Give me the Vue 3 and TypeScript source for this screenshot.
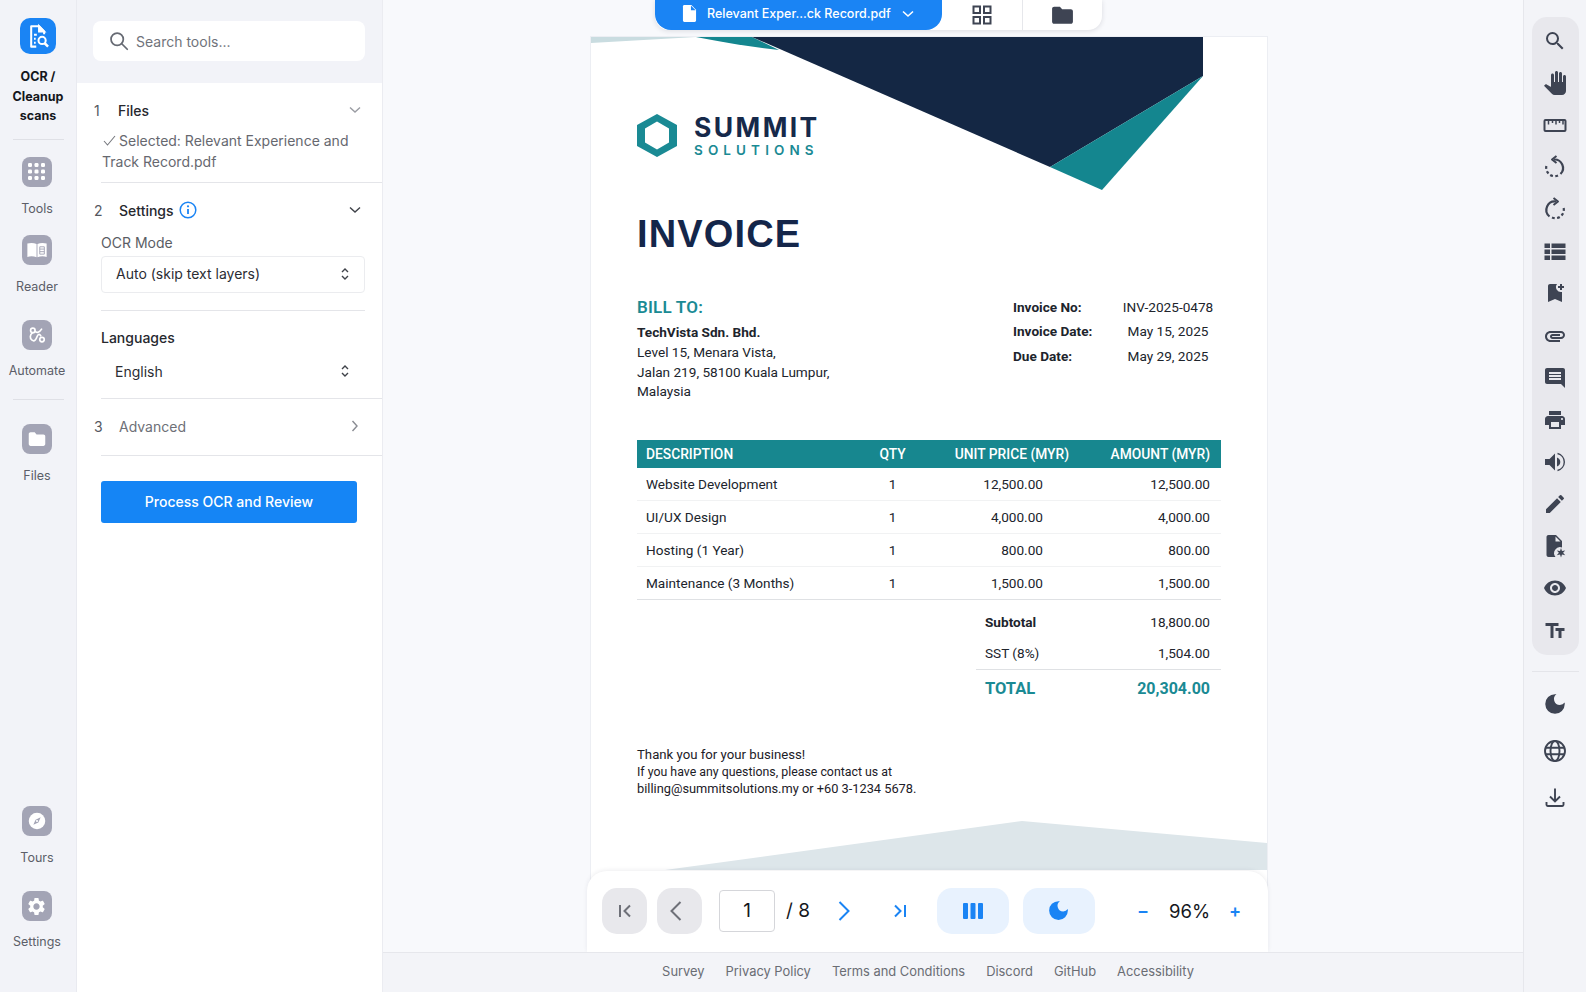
<template>
  <div class="app">
    <!-- left rail -->
    <nav class="rail">
      <div class="rail-active">
        <span class="ocr-icon">
          <svg viewBox="0 0 24 24" width="27" height="27" fill="none" stroke="#fff" stroke-width="1.800">
            <path d="M10 21H5.500V2.800h7l4.500 4.700V10" stroke-linejoin="round" />
            <path d="M12.500 2.800v4.700H17z" fill="#fff" />
            <path d="M8 10.500h2.500M8 14h1.500M8 17.500h1.500" />
            <circle cx="15.200" cy="15.500" r="3.200" />
            <path d="M17.500 18l3 3" stroke-width="2.200" />
          </svg>
        </span>
        <span class="rail-title">OCR /<br />Cleanup<br />scans</span>
      </div>
      <div class="rail-rule first"></div>
      <button class="rail-btn tools">
        <span class="rail-icon">
          <svg viewBox="0 0 20 20" width="20" height="20" fill="#fff">
            <rect v-for="d in toolDots" :key="d.k" :x="d.x" :y="d.y" width="4" height="4" rx="1.200" />
          </svg>
        </span>
        <span>Tools</span>
      </button>
      <button class="rail-btn reader">
        <span class="rail-icon">
          <svg viewBox="0 0 24 24" width="22" height="22">
            <path d="M1.500 5c3-1 7-1 10 .5V20c-3-1.500-7-1.500-10-.5z" fill="#fff" />
            <path d="M12.500 5.500c3-1.500 7-1.500 10-.5v14.500c-3-1-7-1-10 .5z" fill="#fff" />
            <path d="M15 8.500h5v8h-5zM15 11h5M15 13.800h5" fill="none" stroke="#a3a4b5" stroke-width="1" />
          </svg>
        </span>
        <span>Reader</span>
      </button>
      <button class="rail-btn automate">
        <span class="rail-icon">
          <svg viewBox="0 0 24 24" width="20" height="20" fill="none" stroke="#fff" stroke-width="2" stroke-linecap="round">
            <circle cx="7" cy="6.500" r="2.700" />
            <circle cx="18" cy="17.500" r="2.700" />
            <path d="M9.500 7.500c2 2.500 5.500 1.500 8-2.500" />
            <path d="M6.500 9.500C3.500 11.500 3 16 6 18.200s5-1 6-4 2.800-4 4.500-1.300" />
          </svg>
        </span>
        <span>Automate</span>
      </button>
      <div class="rail-rule second"></div>
      <button class="rail-btn files">
        <span class="rail-icon">
          <svg viewBox="0 0 24 24" width="22" height="22" fill="#fff">
            <path d="M3 6.500C3 5.400 3.900 4.500 5 4.500h4.500l2 2.500H19c1.100 0 2 .9 2 2v8.500c0 1.100-.9 2-2 2H5c-1.100 0-2-.9-2-2z" />
          </svg>
        </span>
        <span>Files</span>
      </button>
      <div class="rail-spacer"></div>
      <button class="rail-btn tours">
        <span class="rail-icon">
          <svg viewBox="0 0 24 24" width="22" height="22">
            <circle cx="12" cy="12" r="9" fill="#fff" />
            <path d="M16 8l-2.500 5.500L8 16l2.500-5.500z" fill="#a3a4b5" />
            <circle cx="12" cy="12" r="1.200" fill="#fff" />
          </svg>
        </span>
        <span>Tours</span>
      </button>
      <button class="rail-btn settings">
        <span class="rail-icon">
          <svg viewBox="0 0 24 24" width="21" height="21" fill="#fff">
            <path d="M19.140 12.940c.04-.3.060-.61.060-.94 0-.32-.02-.64-.07-.94l2.030-1.580a.49.49 0 0 0 .12-.61l-1.920-3.320a.488.488 0 0 0-.59-.22l-2.390.96c-.5-.38-1.030-.7-1.620-.94l-.36-2.540a.484.484 0 0 0-.48-.41h-3.840c-.24 0-.43.17-.47.41l-.36 2.540c-.59.24-1.130.57-1.620.94l-2.390-.96c-.22-.08-.47 0-.59.22L2.740 8.870c-.12.21-.08.47.12.61l2.030 1.580c-.05.3-.09.63-.09.94s.02.64.07.94l-2.030 1.580a.49.49 0 0 0-.12.61l1.920 3.320c.12.22.37.29.59.22l2.390-.96c.5.38 1.030.7 1.620.94l.36 2.540c.05.24.24.41.48.41h3.840c.24 0 .44-.17.47-.41l.36-2.540c.59-.24 1.130-.56 1.620-.94l2.390.96c.22.08.47 0 .59-.22l1.920-3.320c.12-.22.07-.47-.12-.61l-2.010-1.580zM12 15.600A3.610 3.610 0 0 1 8.400 12c0-1.980 1.620-3.600 3.600-3.600s3.600 1.620 3.600 3.600-1.620 3.600-3.600 3.600z" />
          </svg>
        </span>
        <span>Settings</span>
      </button>
    </nav>

    <!-- tool panel -->
    <aside class="panel">
      <div class="search-wrap">
        <div class="search">
          <svg viewBox="0 0 24 24" width="22" height="22" fill="none" stroke="#666a73" stroke-width="1.900">
            <circle cx="10" cy="10" r="6.700" />
            <path d="M15 15l6 6" stroke-linecap="round" />
          </svg>
          <span>Search tools...</span>
        </div>
      </div>

      <section class="step step-files">
        <div class="step-head">
          <span class="num">1</span>
          <span class="step-name">Files</span>
          <svg class="chev light" viewBox="0 0 12 8" width="12" height="8"><path d="M1 1.500l5 4.500 5-4.500" /></svg>
        </div>
        <p class="selected">
          <svg class="tick" viewBox="0 0 13 11" width="13" height="11"><path d="M1 6l3.500 4L12 1" /></svg>Selected: Relevant Experience and Track Record.pdf
        </p>
      </section>

      <section class="step step-settings">
        <div class="step-head">
          <span class="num">2</span>
          <span class="step-name">Settings</span>
          <svg class="info" viewBox="0 0 18 18" width="18" height="18">
            <circle cx="9" cy="9" r="7.800" fill="none" stroke="#1a84f4" stroke-width="1.500" />
            <path d="M9 8v5" stroke="#1a84f4" stroke-width="1.800" />
            <circle cx="9" cy="5.300" r="1.100" fill="#1a84f4" />
          </svg>
          <svg class="chev" viewBox="0 0 12 8" width="12" height="8"><path d="M1 1.500l5 4.500 5-4.500" /></svg>
        </div>
        <div class="field-label">OCR Mode</div>
        <div class="select">
          <span>Auto (skip text layers)</span>
          <svg viewBox="0 0 10 16" width="10" height="16" class="updown"><path d="M2 6l3-3 3 3M2 10l3 3 3-3" /></svg>
        </div>
        <div class="inner-rule"></div>
        <div class="lang-label">Languages</div>
        <div class="lang-select">
          <span>English</span>
          <svg viewBox="0 0 10 16" width="10" height="16" class="updown"><path d="M2 6l3-3 3 3M2 10l3 3 3-3" /></svg>
        </div>
      </section>

      <section class="step step-advanced">
        <div class="step-head muted">
          <span class="num">3</span>
          <span class="step-name">Advanced</span>
          <svg class="chev-right" viewBox="0 0 8 12" width="8" height="12"><path d="M1.500 1l4.500 5-4.500 5" /></svg>
        </div>
      </section>

      <button class="process">Process OCR and Review</button>
    </aside>

    <!-- viewer -->
    <main class="main">
      <div class="viewer">
        <div class="doc-tabs">
          <div class="doc-tab">
            <svg viewBox="0 0 16 20" width="15" height="19">
              <path d="M1 2.500C1 1.700 1.700 1 2.500 1H10l5 5v11.500c0 .8-.7 1.500-1.500 1.500h-11C1.700 19 1 18.300 1 17.500z" fill="#fff" />
              <path d="M9.500 1.500v5h5z" fill="#1a84f4" />
            </svg>
            <span>Relevant Exper...ck Record.pdf</span>
            <svg class="tab-chev" viewBox="0 0 12 8" width="12" height="8"><path d="M1 1.500l5 4.500 5-4.500" /></svg>
          </div>
          <div class="doc-action">
            <svg viewBox="0 0 20 20" width="20" height="20" fill="none" stroke="#3e4453" stroke-width="2">
              <rect x="1.500" y="1.500" width="6.500" height="6.500" />
              <rect x="12" y="1.500" width="6.500" height="6.500" />
              <rect x="1.500" y="12" width="6.500" height="6.500" />
              <rect x="12" y="12" width="6.500" height="6.500" />
            </svg>
          </div>
          <div class="doc-action">
            <svg viewBox="0 0 24 24" width="25" height="25" fill="#3e4453">
              <path d="M2 5.500C2 4.400 2.900 3.500 4 3.500h5.500l2.200 2.500H20c1.100 0 2 .9 2 2v10c0 1.100-.9 2-2 2H4c-1.100 0-2-.9-2-2z" />
            </svg>
          </div>
        </div>

        <article class="page">
          <svg class="page-art" viewBox="0 0 676 200" width="676" height="200">
            <path d="M0 0h105L0 6z" fill="#c9dce0" />
            <path d="M105 0h56l27 13C160 10 130 5 105 0z" fill="#14868f" />
            <path d="M161 0h451v39L459 130z" fill="#142744" />
            <path d="M612 39L459 130l52 23z" fill="#14868f" />
          </svg>
          <svg class="page-art-bottom" viewBox="0 0 676 60" width="676" height="60">
            <path d="M74 60L431 11 676 33v27z" fill="#dde6ea" />
          </svg>

          <div class="brand">
            <svg viewBox="0 0 40 43" width="40" height="43">
              <path fill-rule="evenodd" d="M20 0L40 11V32L20 43 0 32V11zM20 7.500L8 14.500V28.500L20 35.500 32 28.500V14.500z" fill="#1a8a94" />
            </svg>
            <div class="brand-text">
              <div class="brand-name">SUMMIT</div>
              <div class="brand-sub">SOLUTIONS</div>
            </div>
          </div>

          <h1 class="invoice-title">INVOICE</h1>

          <div class="info-row">
            <div class="bill">
              <div class="bill-label">BILL TO:</div>
              <div class="bill-name">TechVista Sdn. Bhd.</div>
              <div>Level 15, Menara Vista,</div>
              <div>Jalan 219, 58100 Kuala Lumpur,</div>
              <div>Malaysia</div>
            </div>
            <div class="meta">
              <template v-for="m in meta" :key="m.label">
                <span class="meta-label">{{ m.label }}</span>
                <span class="meta-value">{{ m.value }}</span>
              </template>
            </div>
          </div>

          <div class="table">
            <div class="thead">
              <span class="c-desc">DESCRIPTION</span>
              <span class="c-qty">QTY</span>
              <span class="c-unit">UNIT PRICE (MYR)</span>
              <span class="c-amt">AMOUNT (MYR)</span>
            </div>
            <div v-for="r in rows" :key="r.desc" class="trow">
              <span class="c-desc">{{ r.desc }}</span>
              <span class="c-qty">1</span>
              <span class="c-unit val">{{ r.unit }}</span>
              <span class="c-amt">{{ r.amount }}</span>
            </div>
          </div>

          <div class="totals">
            <div class="tot-row"><b>Subtotal</b><span>18,800.00</span></div>
            <div class="tot-row tax"><span>SST (8%)</span><span>1,504.00</span></div>
            <div class="tot-row grand"><span>TOTAL</span><span class="grand-val">20,304.00</span></div>
          </div>

          <div class="thanks">
            <div class="thanks-first">Thank you for your business!</div>
            <div class="thanks-second">If you have any questions, please contact us at</div>
            <div class="thanks-third">billing@summitsolutions.my or +60 3-1234 5678.</div>
          </div>
        </article>

        <div class="pager">
          <button class="pg-btn grey">
            <svg viewBox="0 0 16 16" width="16" height="16" class="s-dark"><path d="M3 2v12M13 2.500L7.500 8l5.500 5.500" /></svg>
          </button>
          <button class="pg-btn grey second">
            <svg class="prev" viewBox="0 0 14 22" width="14" height="22"><path d="M11.500 2L2.500 11l9 9" /></svg>
          </button>
          <div class="page-input">1</div>
          <span class="page-total">/ 8</span>
          <svg class="pg-next" viewBox="0 0 14 22" width="14" height="22"><path d="M2.500 2l9 9-9 9" /></svg>
          <svg class="pg-last" viewBox="0 0 16 16" width="16" height="16"><path d="M3 2.500L8.500 8 3 13.500M13 2v12" /></svg>
          <button class="pg-btn blue columns">
            <svg viewBox="0 0 20 16" width="20" height="16" fill="#1a84f4">
              <rect x="0" y="0" width="5" height="16" rx="1" />
              <rect x="7.500" y="0" width="5" height="16" rx="1" />
              <rect x="15" y="0" width="5" height="16" rx="1" />
            </svg>
          </button>
          <button class="pg-btn blue moon">
            <svg viewBox="0 0 24 24" width="25" height="25" fill="#1a84f4"><path :d="icons.moon" /></svg>
          </button>
          <span class="zoom-sign minus">−</span>
          <span class="zoom-val">96%</span>
          <span class="zoom-sign">+</span>
        </div>
      </div>

      <footer class="footer">
        <a v-for="l in links" :key="l">{{ l }}</a>
      </footer>
    </main>

    <!-- right rail -->
    <aside class="right">
      <div class="pill">
        <span v-for="t in topTools" :key="t.name" class="tool">
          <svg v-if="t.name === 'ruler'" viewBox="0 0 24 24" width="24" height="24" fill="none" stroke="#3e4453" stroke-width="2">
            <rect x="1.500" y="7" width="21" height="11" rx="1" />
            <path d="M5.500 7v4.500M9.500 7v3M13 7v4.500M16.500 7v3M20 7v4.500" stroke-width="1.500" />
          </svg>
          <svg v-else-if="t.name === 'undo'" viewBox="0 0 24 24" width="24" height="24" fill="none" stroke="#3e4453" stroke-width="2.200">
            <path d="M11 4.500a8.500 8.500 0 0 1 6.500 14.500" />
            <path d="M15 20.500a8.500 8.500 0 0 1-11-11.500" stroke-dasharray="2.800 2.300" />
            <path d="M13.500 1L9 4.500 13.500 8" stroke-width="2" stroke-linejoin="round" />
          </svg>
          <svg v-else-if="t.name === 'redo'" viewBox="0 0 24 24" width="24" height="24" fill="none" stroke="#3e4453" stroke-width="2.200">
            <path d="M13 4.500A8.500 8.500 0 0 0 6.500 19.500" />
            <path d="M9 20.500a8.500 8.500 0 0 0 11-11.500" stroke-dasharray="2.800 2.300" />
            <path d="M10.500 1L15 4.500 10.500 8" stroke-width="2" stroke-linejoin="round" />
          </svg>
          <svg v-else-if="t.name === 'list'" viewBox="0 0 24 24" width="24" height="24" fill="#3e4453">
            <path d="M1.500 4.500h5.500v4.500H1.500zM8.500 4.500H22.500v4.500H8.500zM1.500 10.500h5.500v4.500H1.500zM8.500 10.500H22.500v4.500H8.500zM1.500 16.500h5.500V21H1.500zM8.500 16.500H22.500V21H8.500z" />
          </svg>
          <svg v-else-if="t.name === 'filestar'" viewBox="0 0 24 24" width="24" height="24" fill="#3e4453">
            <path d="M3.500 3c0-1.100.9-2 2-2H13l6 6v6.500a6 6 0 0 0-6.500 9.500h-7c-1.100 0-2-.9-2-2zM12.500 2.500V7.500h5z" />
            <path d="M18 14l1 3 3.200-.6-2.100 2.400 2.100 2.400L19 20.600 18 23.500l-1-2.900-3.200.6 2.100-2.400-2.100-2.400 3.200.6z" />
          </svg>
          <svg v-else-if="t.name === 'sound'" viewBox="0 0 24 24" width="24" height="24" fill="#3e4453">
            <path d="M2 9v6h4.500L12 20.500V3.500L6.500 9z" />
            <path d="M14 7.500c2 .9 3.300 2.500 3.300 4.500S16 15.600 14 16.500z" />
            <path d="M14.500 3.500c4 1 6.800 4.500 6.800 8.500s-2.800 7.500-6.800 8.500" fill="none" stroke="#3e4453" stroke-width="1.400" />
          </svg>
          <svg v-else viewBox="0 0 24 24" width="24" height="24" fill="#3e4453"><path :d="t.d" /></svg>
        </span>
      </div>
      <div class="right-rule"></div>
      <span class="tool low">
        <svg viewBox="0 0 24 24" width="26" height="26" fill="#3e4453"><path :d="icons.moon" /></svg>
      </span>
      <span class="tool low">
        <svg viewBox="0 0 24 24" width="24" height="24" fill="none" stroke="#3e4453" stroke-width="1.900">
          <circle cx="12" cy="12" r="10" />
          <ellipse cx="12" cy="12" rx="4.500" ry="10" />
          <path d="M2.500 8.700h19M2.500 15.300h19" />
        </svg>
      </span>
      <span class="tool low">
        <svg viewBox="0 0 24 24" width="24" height="24" fill="none" stroke="#3e4453" stroke-width="1.900">
          <path d="M12 3.500v12.500M7 11.500l5 5 5-5" />
          <path d="M3.500 17v2.800c0 .7.500 1.200 1.200 1.200h14.600c.7 0 1.200-.5 1.200-1.200V17" />
        </svg>
      </span>
    </aside>
  </div>
</template>

<script setup lang="ts">
interface InvoiceRow {
  desc: string;
  unit: string;
  amount: string;
}

const icons = {
  moon: "M12 3a9 9 0 1 0 9 9c0-.46-.04-.92-.1-1.360a5.389 5.389 0 0 1-4.400 2.260 5.403 5.403 0 0 1-3.140-9.800c-.44-.06-.9-.1-1.360-.1z",
};

// 3x3 dots of the Tools button
const toolDots = [0, 1, 2].flatMap((row) =>
  [0, 1, 2].map((col) => ({ k: `${row}-${col}`, x: 1 + col * 6.5, y: 1 + row * 6.5 }))
);

const meta = [
  { label: "Invoice No:", value: "INV-2025-0478" },
  { label: "Invoice Date:", value: "May 15, 2025" },
  { label: "Due Date:", value: "May 29, 2025" },
];

const rows: InvoiceRow[] = [
  { desc: "Website Development", unit: "12,500.00", amount: "12,500.00" },
  { desc: "UI/UX Design", unit: "4,000.00", amount: "4,000.00" },
  { desc: "Hosting (1 Year)", unit: "800.00", amount: "800.00" },
  { desc: "Maintenance (3 Months)", unit: "1,500.00", amount: "1,500.00" },
];

const links = ["Survey", "Privacy Policy", "Terms and Conditions", "Discord", "GitHub", "Accessibility"];

const topTools = [
  { name: "search", d: "M15.500 14h-.79l-.28-.27A6.471 6.471 0 0 0 16 9.500 6.500 6.500 0 1 0 9.500 16c1.610 0 3.090-.59 4.230-1.570l.27.28v.79l5 4.990L20.490 19l-4.990-5zm-6 0C7.010 14 5 11.990 5 9.500S7.010 5 9.500 5 14 7.010 14 9.500 11.990 14 9.500 14z" },
  { name: "hand", d: "M23 5.500V20c0 2.200-1.800 4-4 4h-7.300c-1.080 0-2.100-.43-2.850-1.190L1 14.830s1.260-1.230 1.300-1.250c.22-.19.49-.29.79-.29.22 0 .42.060.6.160.04.010 4.310 2.460 4.310 2.460V4c0-.83.67-1.500 1.500-1.500S11 3.170 11 4v7h1V1.500c0-.83.67-1.500 1.500-1.500S15 .67 15 1.500V11h1V2.500c0-.83.67-1.500 1.500-1.500s1.500.67 1.500 1.500V11h1V5.500c0-.83.67-1.500 1.500-1.500s1.500.67 1.500 1.500z" },
  { name: "ruler", d: "" },
  { name: "undo", d: "" },
  { name: "redo", d: "" },
  { name: "list", d: "" },
  { name: "bookmark", d: "M21 7h-2v2h-2V7h-2V5h2V3h2v2h2v2zm-2 14l-7-3-7 3V5c0-1.100.9-2 2-2h7a5.002 5.002 0 0 0 5 7.900V21z" },
  { name: "attach", d: "M2 12.500C2 9.460 4.460 7 7.500 7H18c2.210 0 4 1.790 4 4s-1.790 4-4 4H9.500C8.120 15 7 13.880 7 12.500S8.120 10 9.500 10H17v2H9.410c-.55 0-.55 1 0 1H18c1.100 0 2-.9 2-2s-.9-2-2-2H7.500C5.570 9 4 10.570 4 12.500S5.570 16 7.500 16H17v2H7.500C4.460 18 2 15.540 2 12.500z" },
  { name: "comment", d: "M21.990 4c0-1.100-.89-2-1.990-2H4c-1.100 0-2 .9-2 2v12c0 1.100.9 2 2 2h14l4 4-.01-18zM18 14H6v-2h12v2zm0-3H6V9h12v2zm0-3H6V6h12v2z" },
  { name: "print", d: "M19 8H5c-1.660 0-3 1.340-3 3v6h4v4h12v-4h4v-6c0-1.660-1.340-3-3-3zm-3 11H8v-5h8v5zm3-7c-.55 0-1-.45-1-1s.45-1 1-1 1 .45 1 1-.45 1-1 1zm-1-9H6v4h12V3z" },
  { name: "sound", d: "" },
  { name: "pencil", d: "M3 17.250V21h3.750L17.810 9.940l-3.750-3.750L3 17.250zM20.710 7.040a.996.996 0 0 0 0-1.410l-2.340-2.340a.996.996 0 0 0-1.410 0l-1.830 1.830 3.750 3.750 1.830-1.830z" },
  { name: "filestar", d: "" },
  { name: "eye", d: "M12 4.500C7 4.500 2.730 7.610 1 12c1.730 4.390 6 7.500 11 7.500s9.270-3.110 11-7.500c-1.730-4.390-6-7.500-11-7.500zM12 17c-2.760 0-5-2.240-5-5s2.240-5 5-5 5 2.240 5 5-2.240 5-5 5zm0-8c-1.660 0-3 1.340-3 3s1.340 3 3 3 3-1.340 3-3-1.340-3-3-3z" },
  { name: "text", d: "M2.500 4v3h5v12h3V7h5V4h-13zm19 5h-9v3h3v7h3v-7h3V9z" },
];
</script>

<style scoped>
* {
  box-sizing: border-box;
}

button {
  border: 0;
  background: none;
  padding: 0;
  font: inherit;
  color: inherit;
}

.app {
  display: flex;
  width: 1586px;
  height: 992px;
  overflow: hidden;
  font-family: Inter, "Noto Sans", sans-serif;
  color: #222;
  background: #f8f9fc;
}

/* left rail */
.rail {
  width: 77px;
  flex: none;
  display: flex;
  flex-direction: column;
  align-items: center;
  background: #f2f3f8;
  border-right: 1px solid #e9eaf0;
}

.rail-active {
  display: flex;
  flex-direction: column;
  align-items: center;
  padding-top: 18px;
}

.ocr-icon {
  width: 36px;
  height: 36px;
  border-radius: 10px;
  background: #1a84f4;
  display: flex;
  align-items: center;
  justify-content: center;
}

.rail-title {
  margin-top: 13px;
  font-size: 12.5px;
  font-weight: 700;
  line-height: 19.500px;
  text-align: center;
  color: #15171c;
}

.rail-rule {
  width: 51px;
  height: 1px;
  background: #dfe0e6;
}

.rail-rule.first {
  margin-top: 13px;
}

.rail-rule.second {
  margin-top: 20px;
}

.rail-btn {
  display: flex;
  flex-direction: column;
  align-items: center;
  margin-right: 2px;
  font-size: 12.500px;
  color: #5c5e68;
  line-height: 16px;
}

.rail-icon {
  width: 30px;
  height: 30px;
  border-radius: 8px;
  background: #a3a4b5;
  display: flex;
  align-items: center;
  justify-content: center;
  margin-bottom: 14px;
}

.tools { margin-top: 17px; }
.reader { margin-top: 18px; }
.automate { margin-top: 25px; }
.automate .rail-icon { margin-bottom: 13px; }
.files { margin-top: 24px; }
.rail-spacer { flex: 1; }
.settings { margin-top: 25px; margin-bottom: 42px; }
.settings .rail-icon { margin-bottom: 13px; }

/* tool panel */
.panel {
  width: 306px;
  flex: none;
  background: #fff;
  border-right: 1px solid #ebecf1;
}

.search-wrap {
  height: 83px;
  padding: 21px 17px 0 16px;
  background: #f2f3f8;
}

.search {
  display: flex;
  align-items: center;
  gap: 6px;
  height: 40px;
  padding-left: 15px;
  border-radius: 8px;
  background: #fff;
  color: #70737b;
  font-size: 14px;
}

.step {
  margin-left: 24px;
  border-bottom: 1px solid #e4e5e9;
}

.step-head {
  position: relative;
  display: flex;
  align-items: center;
  height: 20px;
  font-size: 14px;
  font-weight: 500;
  color: #26282e;
}

.num {
  width: 24px;
  margin-left: -7px;
  color: #55585f;
  font-weight: 400;
}

.step-name {
  margin-left: 0;
}

.step-settings .step-name,
.step-advanced .step-name {
  margin-left: 1px;
}

.chev,
.chev-right,
.tab-chev,
.updown {
  fill: none;
  stroke: #3f4249;
  stroke-width: 1.400;
}

.chev {
  position: absolute;
  right: 21px;
  top: 6px;
}

.chev.light {
  stroke: #9a9ca3;
}

.chev-right {
  position: absolute;
  right: 23px;
  top: 4px;
  stroke: #8a8c93;
}

.info {
  margin-left: 5px;
}

.step-files {
  height: 100px;
  padding-top: 17px;
}

.selected {
  margin: 10px 16px 0 1px;
  font-size: 14px;
  line-height: 21px;
  color: #66686f;
}

.tick {
  margin: 0 3px 0 1px;
  fill: none;
  stroke: #77797f;
  stroke-width: 1.100;
}

.step-settings {
  height: 216px;
  padding-top: 17px;
}

.field-label {
  margin: 13px 0 0;
  font-size: 14px;
  line-height: 20px;
  color: #5a5d64;
}

.select {
  display: flex;
  align-items: center;
  justify-content: space-between;
  width: 264px;
  height: 37px;
  margin: 3px 0 0;
  padding: 0 14px 2px;
  border: 1px solid #ebecef;
  border-radius: 4px;
  font-size: 14px;
  color: #2b2d33;
}

.inner-rule {
  width: 264px;
  height: 1px;
  margin: 17px 0 0;
  background: #e4e5e9;
}

.lang-label {
  margin: 17px 0 0;
  font-size: 14px;
  font-weight: 500;
  line-height: 20px;
  color: #26282e;
}

.lang-select {
  display: flex;
  align-items: center;
  justify-content: space-between;
  width: 235px;
  margin: 13px 0 0 14px;
  height: 20px;
  font-size: 14px;
  color: #2b2d33;
}

.step-advanced {
  height: 57px;
  padding-top: 17px;
}

.muted {
  font-weight: 400;
  color: #6e7077;
}

.process {
  display: block;
  width: 256px;
  height: 42px;
  margin: 25px 0 0 24px;
  padding-bottom: 2px;
  border-radius: 3px;
  background: #1585f5;
  color: #fff;
  font-size: 14px;
  font-weight: 500;
}

/* viewer */
.main {
  flex: 1;
  min-width: 0;
  display: flex;
  flex-direction: column;
}

.viewer {
  position: relative;
  flex: 1;
  min-height: 0;
  overflow: hidden;
}

.doc-tabs {
  position: absolute;
  z-index: 2;
  top: 0;
  left: 272px;
  width: 447px;
  height: 30px;
  display: flex;
  background: #fff;
  border-radius: 0 0 14px 14px;
  box-shadow: 0 1px 5px rgba(40, 44, 60, 0.14);
}

.doc-tab {
  width: 287px;
  display: flex;
  align-items: center;
  padding: 0 0 3px 27px;
  border-radius: 0 0 16px 16px;
  background: #1a84f4;
  color: #fff;
  font-size: 12.500px;
  font-weight: 500;
}

.doc-tab span {
  margin-left: 10px;
}

.tab-chev {
  stroke: #fff;
  stroke-width: 1.600;
  margin-left: 11px;
}

.doc-action {
  flex: 1;
  display: flex;
  align-items: center;
  justify-content: center;
}

.doc-action + .doc-action {
  border-left: 1px solid #e6e7eb;
}

.page {
  position: relative;
  width: 676px;
  height: 900px;
  margin: 37px 0 0 208px;
  padding: 77px 46px 0;
  background: #fff;
  box-shadow: 0 0 0 1px #eceef3;
  font-family: Roboto, "Liberation Sans", sans-serif;
  font-size: 13.600px;
  color: #20242c;
}

.page-art {
  position: absolute;
  top: 0;
  left: 0;
}

.page-art-bottom {
  position: absolute;
  top: 773px;
  left: 0;
}

.brand {
  position: relative;
  display: flex;
  align-items: center;
  height: 43px;
}

.brand-text {
  margin-left: 17px;
  font-family: Inter, sans-serif;
  line-height: 1;
}

.brand-name {
  font-size: 26.500px;
  font-weight: 700;
  letter-spacing: 2.400px;
  color: #16294a;
  line-height: 26px;
}

.brand-sub {
  margin-top: 3px;
  font-size: 13.500px;
  font-weight: 600;
  letter-spacing: 5.100px;
  color: #1a8a94;
  line-height: 14px;
}

.invoice-title {
  position: relative;
  margin: 54px 0 0;
  font-family: "Liberation Sans", sans-serif;
  font-size: 38px;
  font-weight: 700;
  line-height: 46px;
  color: #14264a;
  letter-spacing: 1.150px;
}

.info-row {
  display: flex;
  justify-content: space-between;
  margin-top: 39px;
}

.bill {
  line-height: 19.800px;
}

.bill-label {
  font-size: 17px;
  font-weight: 600;
  letter-spacing: 0.200px;
  line-height: 20px;
  margin-top: 0.500px;
  margin-bottom: 6.500px;
  color: #1a8a94;
}

.bill-name,
.meta-label {
  font-weight: 700;
}

.meta {
  display: grid;
  grid-template-columns: 101px 108px;
  grid-auto-rows: 24.300px;
  margin: -1px -1px 0 0;
  align-items: center;
}

.meta-value {
  text-align: center;
}

.table {
  margin-top: 38px;
}

.thead,
.trow {
  display: grid;
  grid-template-columns: 223px 65px 155px 141px;
  align-items: center;
}

.thead {
  height: 28px;
  background: #17878f;
  color: #fff;
  font-size: 13.800px;
  font-weight: 500;
}

.trow {
  height: 33px;
  border-bottom: 1px solid #f1f2f3;
}

.trow:last-child {
  border-bottom: 1.500px solid #dfe1e4;
}

.c-desc {
  padding-left: 9px;
}

.c-qty {
  text-align: center;
}

.c-unit {
  text-align: right;
  padding-right: 11px;
}

.c-unit.val {
  padding-right: 37px;
}

.c-amt {
  text-align: right;
  padding-right: 11px;
}

.totals {
  width: 245px;
  margin-left: 339px;
  padding-top: 7px;
}

.tot-row {
  display: flex;
  justify-content: space-between;
  align-items: center;
  height: 30px;
  padding: 0 11px 0 9px;
}

.tot-row.tax {
  height: 33px;
  border-bottom: 1.500px solid #dfe1e4;
}

.grand {
  margin-top: 3px;
  font-size: 16.500px;
  font-weight: 700;
  color: #1a8a94;
}

.grand-val {
  font-size: 16px;
}

.thanks {
  margin-top: 42px;
  color: #1c2027;
}

.thanks-first {
  font-size: 13.200px;
  line-height: 19.500px;
}

.thanks-second {
  font-size: 12.350px;
  line-height: 15.500px;
}

.thanks-third {
  font-size: 12.800px;
  line-height: 17.500px;
}

.pager {
  position: absolute;
  z-index: 2;
  left: 204px;
  bottom: 0;
  width: 681px;
  height: 81px;
  display: flex;
  align-items: center;
  padding: 0 0 2px 15px;
  background: #fff;
  border-radius: 20px 20px 0 0;
  box-shadow: 0 -1px 4px rgba(40, 44, 60, 0.08);
}

.pg-btn {
  width: 45px;
  height: 46px;
  border-radius: 15px;
  display: flex;
  align-items: center;
  justify-content: center;
}

.grey {
  background: #e8e8ec;
}

.grey.second {
  margin-left: 10px;
}

.prev {
  margin-right: 7px;
  fill: none;
  stroke: #6e7078;
  stroke-width: 2;
}

.blue {
  width: 72px;
  background: #e8f2fe;
}

.columns {
  margin-left: 29px;
}

.moon {
  margin-left: 14px;
}

.s-dark {
  fill: none;
  stroke: #6e7078;
  stroke-width: 2;
}

.page-input {
  width: 56px;
  height: 42px;
  margin-left: 17px;
  border: 1px solid #d5d6da;
  border-radius: 4px;
  display: flex;
  align-items: center;
  justify-content: center;
  font-size: 19px;
  color: #15171c;
}

.page-total {
  margin-left: 11px;
  font-size: 19px;
  color: #15171c;
}

.pg-next,
.pg-last {
  fill: none;
  stroke: #1a84f4;
  stroke-width: 2;
}

.pg-next {
  margin-left: 27px;
}

.pg-last {
  margin-left: 41px;
}

.zoom-sign {
  color: #1a84f4;
  font-size: 18px;
  font-weight: 600;
  width: 12px;
  text-align: center;
}

.minus {
  margin-left: 42px;
}

.zoom-val {
  margin: 0 19px 0 20px;
  font-size: 18.500px;
  color: #15171c;
}

.footer {
  height: 40px;
  flex: none;
  display: flex;
  align-items: center;
  justify-content: center;
  gap: 21px;
  padding: 0 50px 3px 0;
  background: #f3f4f8;
  border-top: 1px solid #e6e7ec;
  font-size: 12.900px;
  color: #6a6d74;
}

/* right rail */
.right {
  width: 63px;
  flex: none;
  display: flex;
  flex-direction: column;
  align-items: center;
  background: #f3f4f8;
  border-left: 1px solid #e6e7ec;
}

.pill {
  width: 47px;
  margin-top: 17px;
  padding: 2.500px 0 3.500px;
  display: flex;
  flex-direction: column;
  align-items: center;
  border-radius: 15px;
  background: #e8e8ed;
}

.tool {
  height: 42.150px;
  display: flex;
  align-items: center;
  justify-content: center;
}

.right-rule {
  width: 47px;
  height: 1px;
  margin-top: 16px;
  background: #e4e5ea;
}

.tool.low {
  height: 46.500px;
}

.right-rule + .tool {
  margin-top: 9px;
}
</style>
